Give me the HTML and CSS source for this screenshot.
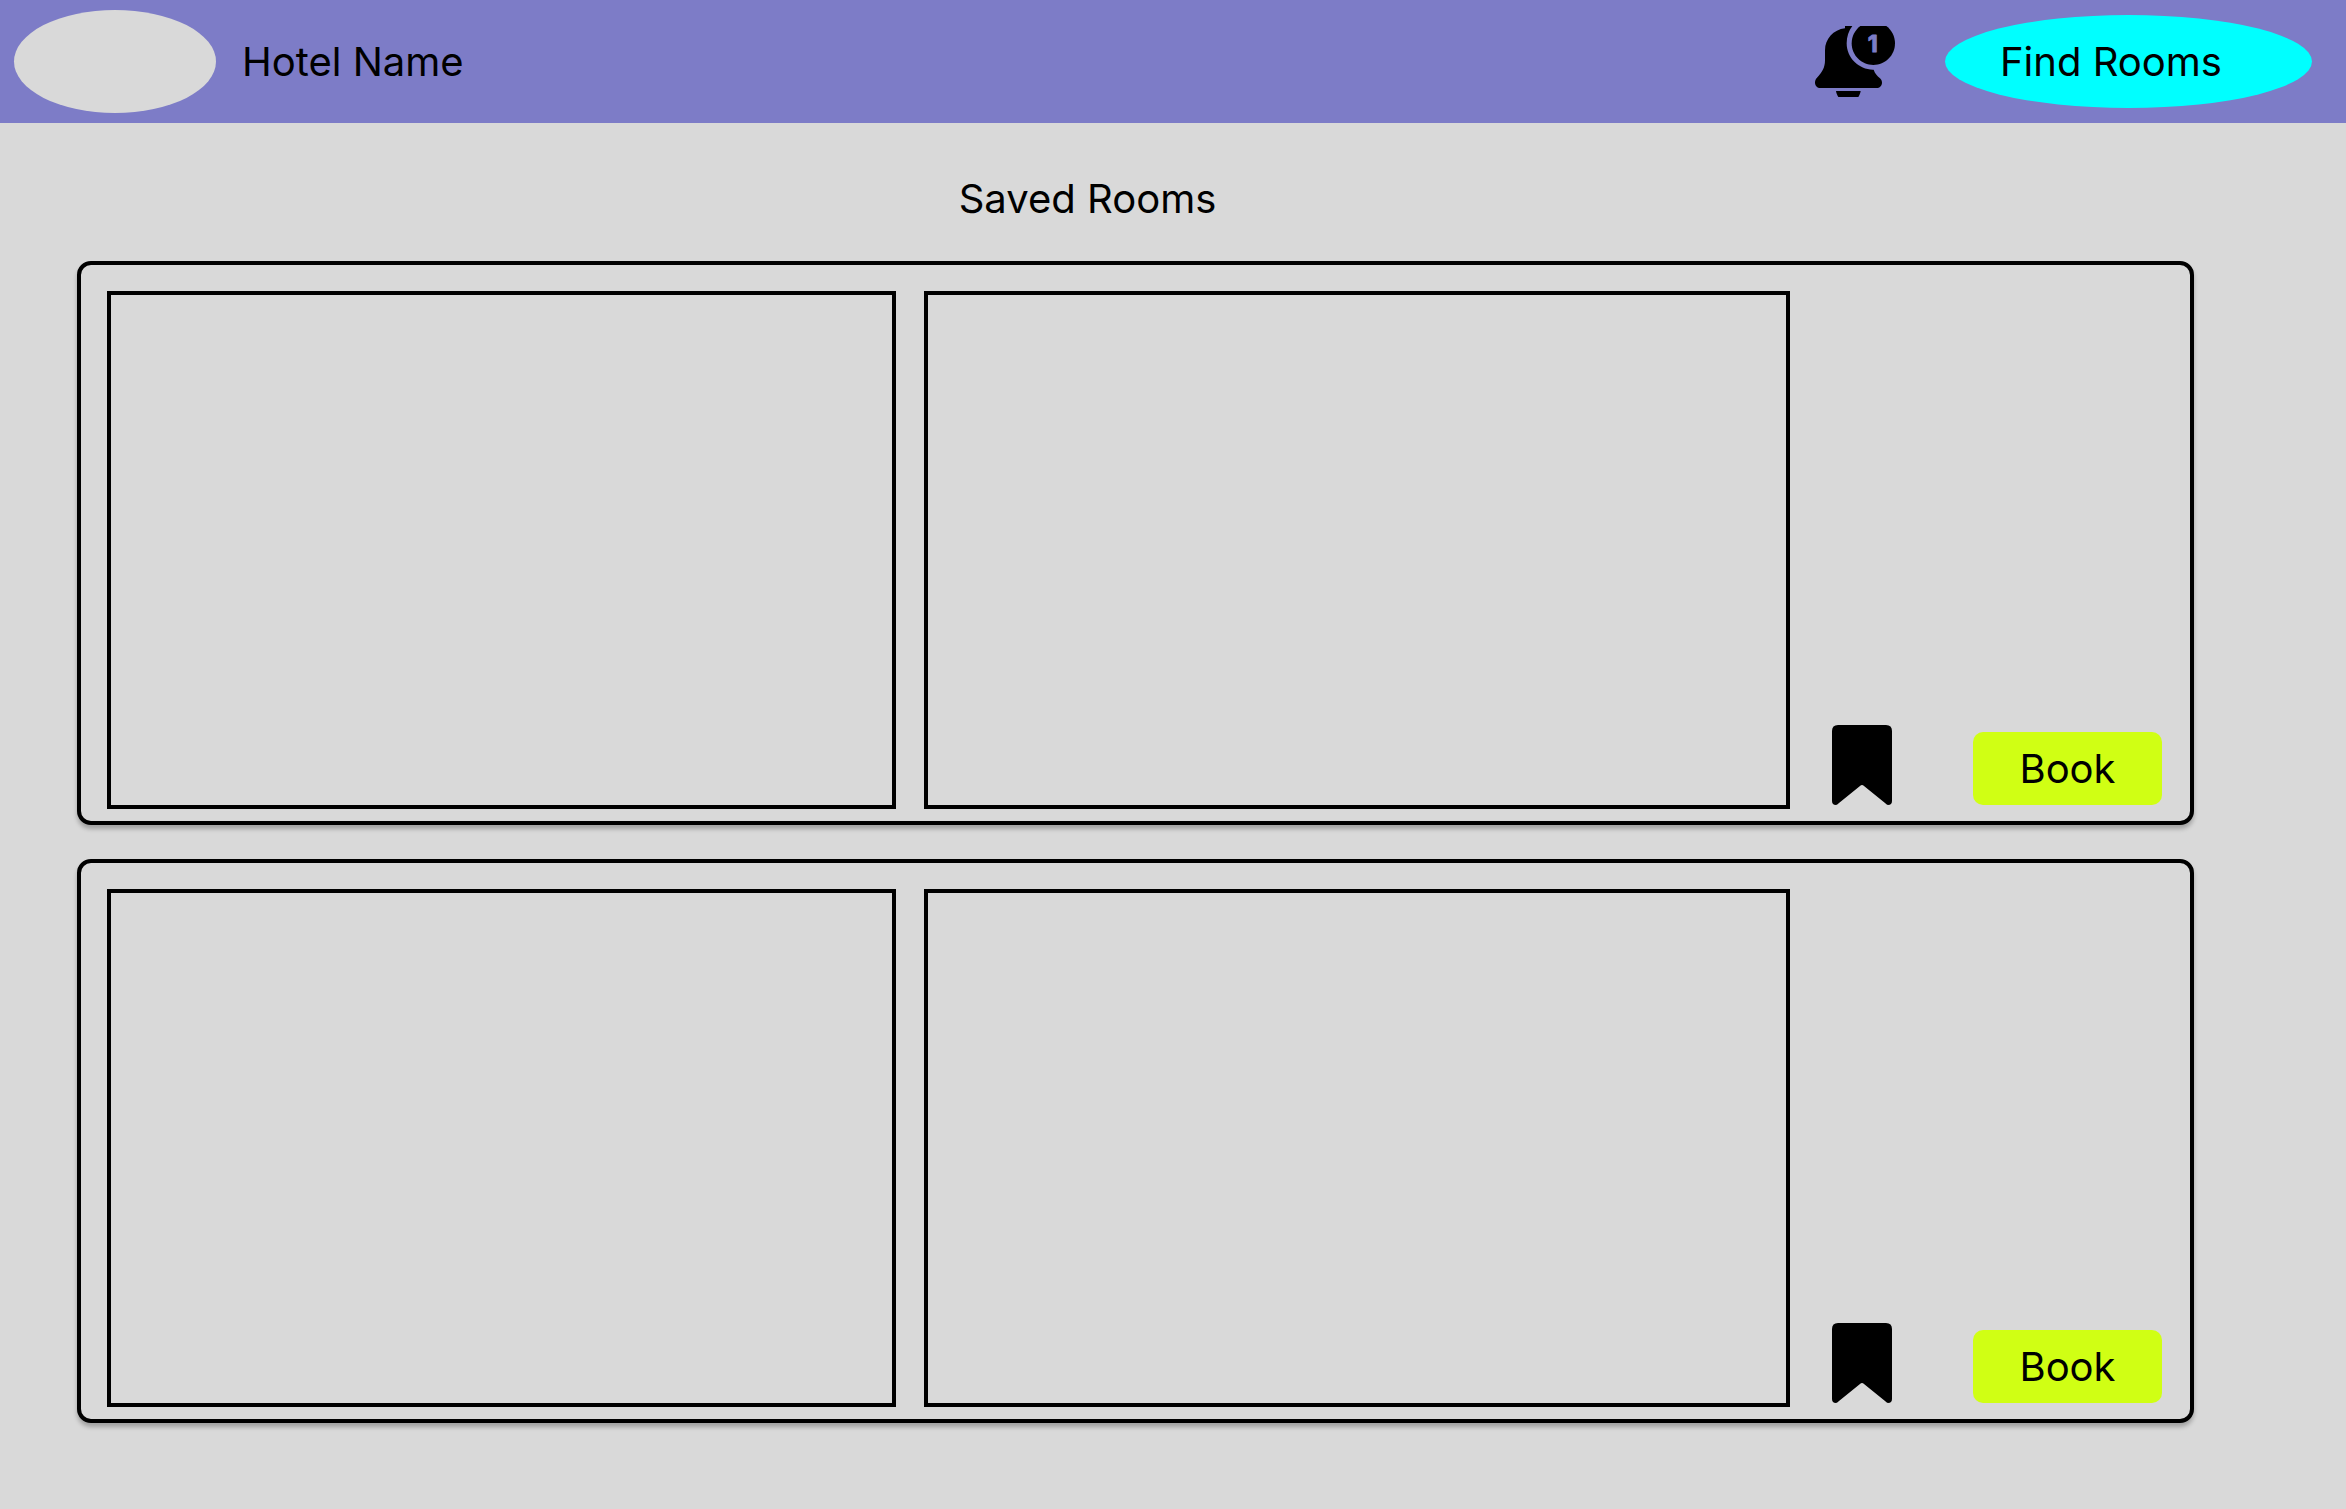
FILE: index.html
```html
<!DOCTYPE html>
<html lang="en">
<head>
  <meta charset="utf-8">
  <meta name="viewport" content="width=device-width, initial-scale=1">
  <title>Saved Rooms</title>
  <link rel="stylesheet" href="styles.css">
</head>
<body>
  <header class="topbar">
    <div class="logo"></div>
    <span class="hotel-name">Hotel Name</span>
    <button class="bell" type="button" aria-label="Notifications">
      <svg class="bell-icon" viewBox="72 78 246 216" aria-hidden="true">
        <path d="M165 78H187C176 92 170 110 170 130C170 173 206 209 249 209H251C255 221 261 227 270 235C274 239 276 243 276 248C276 257 269 264 260 264H91C82 264 75 257 75 248C75 242 77 237 81 233C96 218 105 203 105 181V151C105 117 130 89 165 85Z"/>
        <path d="M211 78H289C305 90 315 109 315 130C315 166 286 195 250 195C214 195 185 166 185 130C185 109 195 90 211 78Z"/>
        <path d="M138 273H212C211 281 208 286 205 291H145C142 286 139 281 138 273Z"/>
        <text class="bell-count" x="248" y="157">1</text>
      </svg>
    </button>
    <a class="find-rooms" href="#">Find Rooms</a>
  </header>
  <main class="content">
    <h1 class="title">Saved Rooms</h1>
    <div class="rooms">
      <article class="room">
        <div class="panel"></div>
        <div class="panel"></div>
        <div class="actions">
          <button class="bookmark" type="button" aria-label="Remove from saved">
            <svg class="bookmark-icon" viewBox="0 0 60 80" aria-hidden="true">
              <path d="M6 0H54Q60 0 60 6V76Q60 80 56 80Q55 80 53 78L32 61Q30 59 28 61L7 78Q5 80 4 80Q0 80 0 76V6Q0 0 6 0Z"/>
            </svg>
          </button>
          <button class="book" type="button">Book</button>
        </div>
      </article>
      <article class="room">
        <div class="panel"></div>
        <div class="panel"></div>
        <div class="actions">
          <button class="bookmark" type="button" aria-label="Remove from saved">
            <svg class="bookmark-icon" viewBox="0 0 60 80" aria-hidden="true">
              <path d="M6 0H54Q60 0 60 6V76Q60 80 56 80Q55 80 53 78L32 61Q30 59 28 61L7 78Q5 80 4 80Q0 80 0 76V6Q0 0 6 0Z"/>
            </svg>
          </button>
          <button class="book" type="button">Book</button>
        </div>
      </article>
    </div>
  </main>
</body>
</html>
```

FILE: styles.css
```css
* {
  box-sizing: border-box;
}

body {
  margin: 0;
  background: #d9d9d9;
  color: #000;
  font-family: Inter, sans-serif;
  font-size: 40px;
  line-height: 48px;
}

button {
  padding: 0;
  border: 0;
  background: none;
  color: inherit;
  font: inherit;
  cursor: pointer;
}

svg {
  display: block;
}

.topbar {
  display: flex;
  align-items: center;
  padding: 10px 34px 10px 14px;
  background: #7d7cc7;
}

.logo {
  width: 202px;
  height: 103px;
  border-radius: 50%;
  background: #d9d9d9;
}

.hotel-name {
  margin-left: 26px;
}

.bell {
  margin-left: auto;
}

.bell-icon {
  width: 82px;
  height: 72px;
}

.bell-count {
  fill: #7d7cc7;
  stroke: #7d7cc7;
  stroke-width: 3px;
  stroke-linejoin: round;
  font-size: 70px;
  font-weight: 700;
  text-anchor: middle;
}

.find-rooms {
  width: 367px;
  margin-left: 49px;
  padding: 23px 0 22px 55px;
  border-radius: 50%;
  background: #00ffff;
  color: inherit;
  text-decoration: none;
}

.content {
  padding: 52px 152px 86px 77px;
}

.title {
  margin: 0 0 38px;
  padding-right: 96px;
  font-size: inherit;
  font-weight: 400;
  text-align: center;
}

.rooms {
  display: grid;
  gap: 34px;
}

.room {
  display: grid;
  grid-template-columns: minmax(0, 789fr) minmax(0, 866fr) 344px;
  gap: 28px;
  padding: 26px 28px 12px 26px;
  border: 4px solid #000;
  border-radius: 14px;
  background: #d9d9d9;
  box-shadow: 0 4px 4px rgba(0, 0, 0, 0.25);
}

.panel {
  min-height: 518px;
  border: 4px solid #000;
}

.actions {
  display: flex;
  align-items: flex-end;
  justify-content: space-between;
  padding: 0 0 4px 14px;
}

.bookmark-icon {
  width: 60px;
  height: 80px;
}

.book {
  width: 189px;
  padding: 13px 0 12px;
  border-radius: 10px;
  background: #d0ff14;
}
```
